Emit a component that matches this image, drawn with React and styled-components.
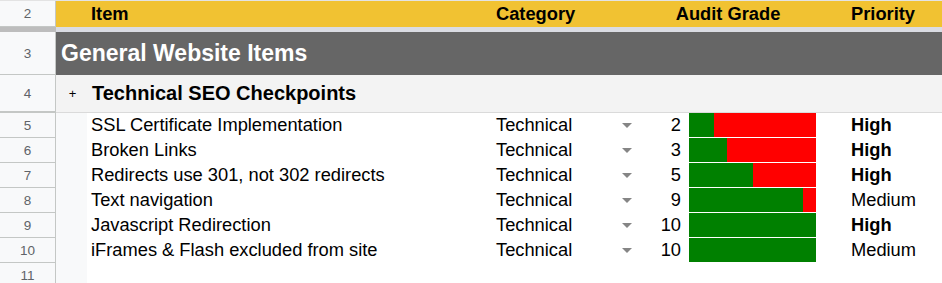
import React from "react";
import styled, { createGlobalStyle } from "styled-components";

const Global = createGlobalStyle`
  html, body { margin: 0; padding: 0; background: #ffffff; }
  body { font-family: "Liberation Sans", Arial, sans-serif; overflow: hidden; }
`;

const COLS = "56px 31px 405px 148px 45px 135px 1fr";

const Sheet = styled.div`
  width: 942px;
  display: flex;
  flex-direction: column;
`;

const Row = styled.div`
  display: grid;
  grid-template-columns: ${COLS};
  height: ${(p) => p.$h}px;
  box-sizing: border-box;
  background: ${(p) => p.$bg || "transparent"};
`;

const RowNum = styled.div`
  grid-column: 1;
  background: #f8f9fa;
  border-right: 1px solid #c4c7c5;
  border-bottom: 1px solid #c4c7c5;
  box-sizing: border-box;
  display: flex;
  align-items: center;
  justify-content: center;
  font-size: 13.5px;
  color: #5f6368;
`;

const GroupCell = styled.div`
  grid-column: 2;
  background: ${(p) => p.$bg || "#f8f9fa"};
  display: flex;
  align-items: center;
  justify-content: center;
  font-size: 13px;
  color: #000;
  padding-left: 2px;
`;

const HeaderRow = styled(Row)`
  border-top: 1px solid #e3e3e3;
`;

const HeaderFill = styled.div`
  grid-column: 2 / -1;
  background: #f1c232;
  display: grid;
  grid-template-columns: 31px 405px 148px 180px 1fr;
  align-items: center;
`;

const HeadText = styled.div`
  font-weight: bold;
  font-size: 18.3px;
  color: #000;
  padding-left: ${(p) => p.$pl ?? 4}px;
  padding-right: ${(p) => p.$pr ?? 0}px;
  text-align: ${(p) => p.$align || "left"};
  grid-column: ${(p) => p.$col};
`;

const Freeze = styled.div`
  display: grid;
  grid-template-columns: 56px 1fr;
  height: 5px;
`;

const FreezeHead = styled.div`
  background: #bdbdbd;
`;

const FreezeBody = styled.div`
  background: #dadce3;
`;

const SectionText = styled.div`
  grid-column: 2 / -1;
  display: flex;
  align-items: center;
  padding-left: 5px;
  font-weight: bold;
  font-size: ${(p) => p.$size}px;
  color: ${(p) => p.$color};
`;

const SubText = styled(SectionText)`
  grid-column: 3 / -1;
  padding-left: 5px;
`;

const Cell = styled.div`
  display: flex;
  align-items: center;
  font-size: 18.3px;
  color: #000;
  white-space: nowrap;
  padding: 0 4px 2px 4px;
  font-weight: ${(p) => (p.$bold ? "bold" : "normal")};
  justify-content: ${(p) => p.$justify || "flex-start"};
`;

const CategoryCell = styled(Cell)`
  justify-content: space-between;
  padding: 0 8px 2px 4px;
`;

const Arrow = styled.span`
  width: 0;
  height: 0;
  border-left: 5px solid transparent;
  border-right: 5px solid transparent;
  border-top: 5px solid #858585;
  margin-top: 2px;
`;

const BarCell = styled.div`
  padding: 0 4px 1px 4px;
  display: flex;
  flex-direction: column;
`;

const Bar = styled.div`
  flex: 1;
  background: #ff0000;
  display: flex;
`;

const BarFill = styled.div`
  background: #008000;
  height: 100%;
`;

const PriorityCell = styled(Cell)`
  padding-left: 31px;
`;

const items = [
  { n: 5, name: "SSL Certificate Implementation", grade: 2, pr: "High" },
  { n: 6, name: "Broken Links", grade: 3, pr: "High" },
  { n: 7, name: "Redirects use 301, not 302 redirects", grade: 5, pr: "High" },
  { n: 8, name: "Text navigation", grade: 9, pr: "Medium" },
  { n: 9, name: "Javascript Redirection", grade: 10, pr: "High" },
  { n: 10, name: "iFrames & Flash excluded from site", grade: 10, pr: "Medium" },
];

export default function App() {
  return (
    <>
      <Global />
      <Sheet>
        <HeaderRow $h={27}>
          <RowNum>2</RowNum>
          <HeaderFill>
            <HeadText $col={2}>Item</HeadText>
            <HeadText $col={3}>Category</HeadText>
            <HeadText $col={4} $align="center" $pl={0} $pr={4}>
              Audit Grade
            </HeadText>
            <HeadText $col={5} $pl={31}>
              Priority
            </HeadText>
          </HeaderFill>
        </HeaderRow>
        <Freeze>
          <FreezeHead />
          <FreezeBody />
        </Freeze>
        <Row $h={43} $bg="#666666">
          <RowNum>3</RowNum>
          <SectionText $size={23} $color="#ffffff">
            General Website Items
          </SectionText>
        </Row>
        <Row $h={37} $bg="#f3f3f3">
          <RowNum>4</RowNum>
          <GroupCell $bg="#f3f3f3">+</GroupCell>
          <SubText $size={20} $color="#000000">
            Technical SEO Checkpoints
          </SubText>
        </Row>
        <Row $h={1} $bg="#dadada">
          <RowNum />
        </Row>
        {items.map((it) => (
          <Row key={it.n} $h={25}>
            <RowNum>{it.n}</RowNum>
            <GroupCell />
            <Cell>{it.name}</Cell>
            <CategoryCell>
              Technical
              <Arrow />
            </CategoryCell>
            <Cell $justify="flex-end">{it.grade}</Cell>
            <BarCell>
              <Bar>
                <BarFill style={{ width: `${it.grade * 10}%` }} />
              </Bar>
            </BarCell>
            <PriorityCell $bold={it.pr === "High"}>{it.pr}</PriorityCell>
          </Row>
        ))}
        <Row $h={25}>
          <RowNum>11</RowNum>
          <GroupCell />
        </Row>
      </Sheet>
    </>
  );
}
